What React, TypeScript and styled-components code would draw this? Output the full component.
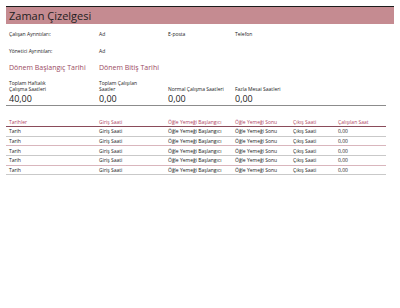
import React from 'react'
import styled, { createGlobalStyle } from 'styled-components'

const GlobalStyle = createGlobalStyle`
  body {
    margin: 0;
    background: #ffffff;
    font-family: 'Open Sans', 'Liberation Sans', sans-serif;
    color: #222222;
  }
`

const COLS = '90px 69px 67px 58px 45px 51px'

const Page = styled.div`
  width: 400px;
  height: 308px;
  padding: 6px 0 0 6px;
  box-sizing: border-box;
`

const TitleBar = styled.div`
  width: 385px;
  height: 17px;
  border-top: 1.5px solid #1c1c1c;
  background: #c58b91;
  display: flex;
  align-items: center;
  padding-left: 3px;
  box-sizing: content-box;
`

const Title = styled.h1`
  margin: 0;
  font-size: 11px;
  font-weight: 400;
  color: #1e1e1e;
  line-height: 17px;
`

const Grid = styled.div<{ h: number }>`
  display: grid;
  grid-template-columns: ${COLS};
  width: 380px;
  height: ${(p) => p.h}px;
  align-items: center;
`

const Small = styled.div`
  font-size: 5px;
  line-height: 6px;
  padding-left: 3px;
  white-space: nowrap;
`

const Period = styled.div`
  font-size: 7px;
  color: #9a4a62;
  padding-left: 3px;
  white-space: nowrap;
`

const LabelCell = styled(Small)`
  align-self: end;
`

const Value = styled.div`
  font-size: 9px;
  line-height: 12px;
  padding-left: 3px;
`

const ValueRow = styled(Grid)`
  border-bottom: 1.2px solid #8c8c8c;
`

const HeadRow = styled(Grid)`
  border-bottom: 1.5px solid #8a4b5a;
  color: #b0465f;
`

const BodyRow = styled(Grid)<{ pink?: boolean }>`
  border-bottom: 0.8px solid ${(p) => (p.pink ? '#d9b6bd' : '#c9c9c9')};
`

const Spacer = styled.div<{ h: number }>`
  height: ${(p) => p.h}px;
`

const rows = [0, 1, 2, 3, 4]

export default function App() {
  return (
    <Page>
      <GlobalStyle />
      <TitleBar>
        <Title>Zaman Çizelgesi</Title>
      </TitleBar>
      <Spacer h={2} />
      <Grid h={16}>
        <Small>Çalışan Ayrıntıları:</Small>
        <Small>Ad</Small>
        <Small>E-posta</Small>
        <Small>Telefon</Small>
      </Grid>
      <Grid h={17}>
        <Small>Yönetici Ayrıntıları:</Small>
        <Small>Ad</Small>
      </Grid>
      <Grid h={17}>
        <Period>Dönem Başlangıç Tarihi</Period>
        <Period style={{ gridColumn: 'span 2' }}>Dönem Bitiş Tarihi</Period>
      </Grid>
      <Grid h={16}>
        <LabelCell>
          Toplam Haftalık
          <br />
          Çalışma Saatleri
        </LabelCell>
        <LabelCell>
          Toplam Çalışılan
          <br />
          Saatler
        </LabelCell>
        <LabelCell>Normal Çalışma Saatleri</LabelCell>
        <LabelCell>Fazla Mesai Saatleri</LabelCell>
      </Grid>
      <ValueRow h={13}>
        <Value>40,00</Value>
        <Value>0,00</Value>
        <Value>0,00</Value>
        <Value>0,00</Value>
      </ValueRow>
      <Spacer h={11} />
      <HeadRow h={9}>
        <Small>Tarihler</Small>
        <Small>Giriş Saati</Small>
        <Small>Öğle Yemeği Başlangıcı</Small>
        <Small>Öğle Yemeği Sonu</Small>
        <Small>Çıkış Saati</Small>
        <Small>Çalışılan Saat</Small>
      </HeadRow>
      {rows.map((r) => (
        <BodyRow h={8.7} key={r} pink={r % 2 === 1}>
          <Small>Tarih</Small>
          <Small>Giriş Saati</Small>
          <Small>Öğle Yemeği Başlangıcı</Small>
          <Small>Öğle Yemeği Sonu</Small>
          <Small>Çıkış Saati</Small>
          <Small>0,00</Small>
        </BodyRow>
      ))}
    </Page>
  )
}
